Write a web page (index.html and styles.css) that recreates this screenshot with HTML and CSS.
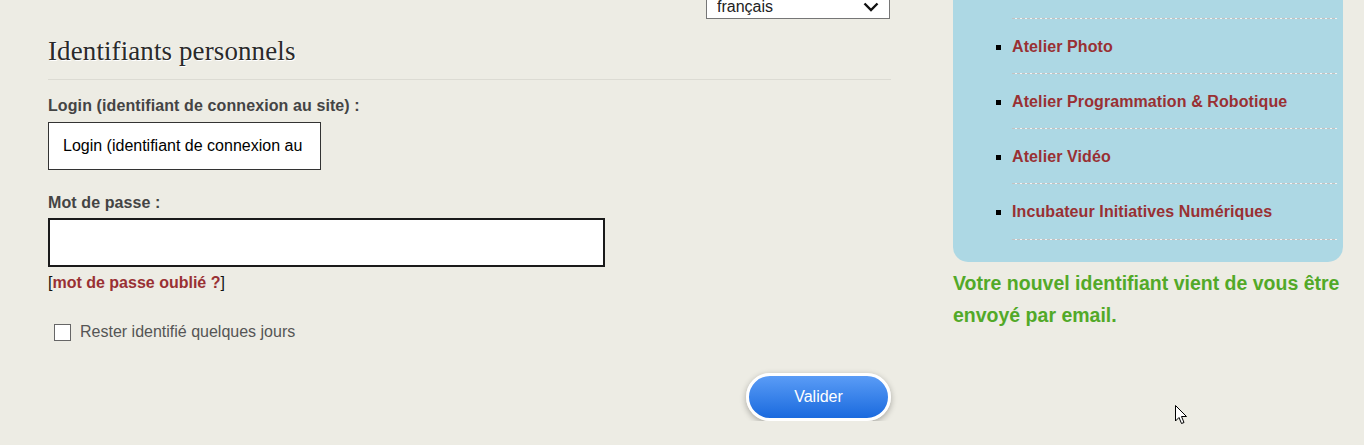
FILE: index.html
```html
<!DOCTYPE html>
<html>

<head>
  <meta charset="utf-8">
  <meta name="viewport" content="width=device-width">
  <title>Identifiants personnels</title>
  <link rel="stylesheet" href="styles.css">
</head>

<body>
  <div class="page">
    <main class="content">
      <div class="lang-bar">
        <div class="lang-select">
          <select class="lang">
            <option>français</option>
            <option>english</option>
          </select>
          <svg class="lang-arrow" width="16" height="10" viewBox="0 0 16 10">
            <path d="M1.5 1.5 L8 8 L14.5 1.5" fill="none" stroke="#111" stroke-width="2.4"/>
          </svg>
        </div>
      </div>

      <h2 class="section-title">Identifiants personnels</h2>

      <form class="login-form">
        <label class="field-label" for="login">Login (identifiant de connexion au site) :</label>
        <input type="text" id="login" class="login-input" value="Login (identifiant de connexion au site)">

        <label class="field-label" for="password">Mot de passe :</label>
        <input type="password" id="password" class="password-input">
        <p class="forgot">[<a href="#">mot de passe oublié ?</a>]</p>

        <label class="remember">
          <input type="checkbox" class="remember-box">
          <span>Rester identifié quelques jours</span>
        </label>

        <div class="actions">
          <button type="button" class="button">Valider</button>
        </div>
      </form>
    </main>

    <aside class="sidebar">
      <ul class="menu">
        <li><a href="#">Atelier Photo</a></li>
        <li><a href="#">Atelier Programmation &amp; Robotique</a></li>
        <li><a href="#">Atelier Vidéo</a></li>
        <li><a href="#">Incubateur Initiatives Numériques</a></li>
      </ul>
      <p class="notice">Votre nouvel identifiant vient de vous être envoyé par email.</p>
    </aside>
  </div>

  <svg class="pointer" width="13" height="21" viewBox="0 0 13 21">
    <path d="M0.5 0.5 L0.5 16 L4 12.5 L6.5 18.5 L9 17.5 L6.5 11.5 L11.5 11.5 Z" fill="#fff" stroke="#000" stroke-width="1"/>
  </svg>
</body>

</html>
```

FILE: styles.css
```css
body {
  font-family: "Liberation Sans", Arial, sans-serif;
  font-size: 16px;
  background-color: #edece4;
  color: #444;
  margin: 0;
  overflow: hidden;
}

.page {
  display: flex;
  align-items: flex-start;
  gap: 62px;
  padding-left: 48px;
}

/* colonne de gauche */
.content {
  width: 843px;
}

.lang-bar {
  display: flex;
  justify-content: flex-end;
  padding-right: 1px;
  margin-top: -7px;
}

.lang-select {
  position: relative;
}

.lang {
  appearance: none;
  width: 184px;
  height: 26px;
  padding: 0 30px 0 10px;
  border: 1px solid #767676;
  border-radius: 0;
  background-color: #fff;
  font-family: "Liberation Sans", Arial, sans-serif;
  font-size: 16px;
  color: #222;
}

.lang-arrow {
  position: absolute;
  right: 11px;
  top: 9px;
  pointer-events: none;
}

.section-title {
  font-family: "Liberation Serif", "Times New Roman", serif;
  font-weight: normal;
  font-size: 27px;
  letter-spacing: 0.1px;
  line-height: 32px;
  color: #2a2a2a;
  text-shadow: 1px 1px 0 #fff;
  margin: 16px 0 0;
  padding-bottom: 12px;
  border-bottom: 1px solid #dcdbd3;
}

.login-form {
  display: flex;
  flex-direction: column;
  align-items: flex-start;
}

.field-label {
  font-weight: bold;
  line-height: 20px;
  letter-spacing: 0.1px;
  color: #444;
  margin-top: 16px;
}

.login-input {
  width: 273px;
  height: 48px;
  box-sizing: border-box;
  margin-top: 6px;
  padding: 0 14px;
  border: 1px solid #333;
  background-color: #fff;
  font-family: "Liberation Sans", Arial, sans-serif;
  font-size: 16px;
  color: #000;
}

.login-input + .field-label {
  margin-top: 23px;
}

.password-input {
  width: 557px;
  height: 49px;
  box-sizing: border-box;
  margin-top: 5px;
  padding: 0 14px;
  border: 2px solid #1a1a1a;
  background-color: #fff;
  font-size: 16px;
}

.forgot {
  margin: 6px 0 0;
  line-height: 20px;
  color: #111;
}

.forgot a {
  color: #993033;
  font-weight: bold;
  text-decoration: none;
}

.remember {
  display: flex;
  align-items: center;
  gap: 9px;
  margin: 29px 0 0 6px;
  color: #555;
  line-height: 20px;
}

.remember-box {
  appearance: none;
  width: 17px;
  height: 17px;
  margin: 0;
  border: 1px solid #666;
  background-color: #fff;
}

.actions {
  align-self: stretch;
  display: flex;
  justify-content: flex-end;
  margin-top: 31px;
}

.button {
  width: 145px;
  height: 48px;
  border: 3px solid #fff;
  border-radius: 24px;
  background: linear-gradient(#5a9cf6, #1a6ade);
  color: #fff;
  font-family: "Liberation Sans", Arial, sans-serif;
  font-size: 16px;
  box-shadow: 0 2px 6px rgba(0, 0, 0, 0.3);
  cursor: pointer;
}

/* colonne de droite */
.sidebar {
  width: 390px;
  margin-top: -20px;
}

.menu {
  margin: 0;
  padding: 38px 6px 22px 59px;
  list-style: square;
  background-color: #add8e4;
  border-radius: 0 0 15px 15px;
}

.menu li {
  padding: 20px 0 17px;
  line-height: 18px;
  color: #000;
  background: repeating-linear-gradient(90deg, #c2c2c2 0 3px, #f2f2f2 3px 5px) top left / 100% 1px no-repeat;
}

.menu li:last-child {
  padding-bottom: 19px;
  background:
    repeating-linear-gradient(90deg, #c2c2c2 0 3px, #f2f2f2 3px 5px) top left / 100% 1px no-repeat,
    repeating-linear-gradient(90deg, #c2c2c2 0 3px, #f2f2f2 3px 5px) bottom left / 100% 1px no-repeat;
}

.menu a {
  color: #993033;
  font-weight: bold;
  letter-spacing: 0.1px;
  text-decoration: none;
}

.notice {
  margin: 5px 0 0;
  font-size: 19.5px;
  font-weight: bold;
  line-height: 32px;
  color: #52a928;
}

.pointer {
  position: absolute;
  left: 1175px;
  top: 405px;
}
```
